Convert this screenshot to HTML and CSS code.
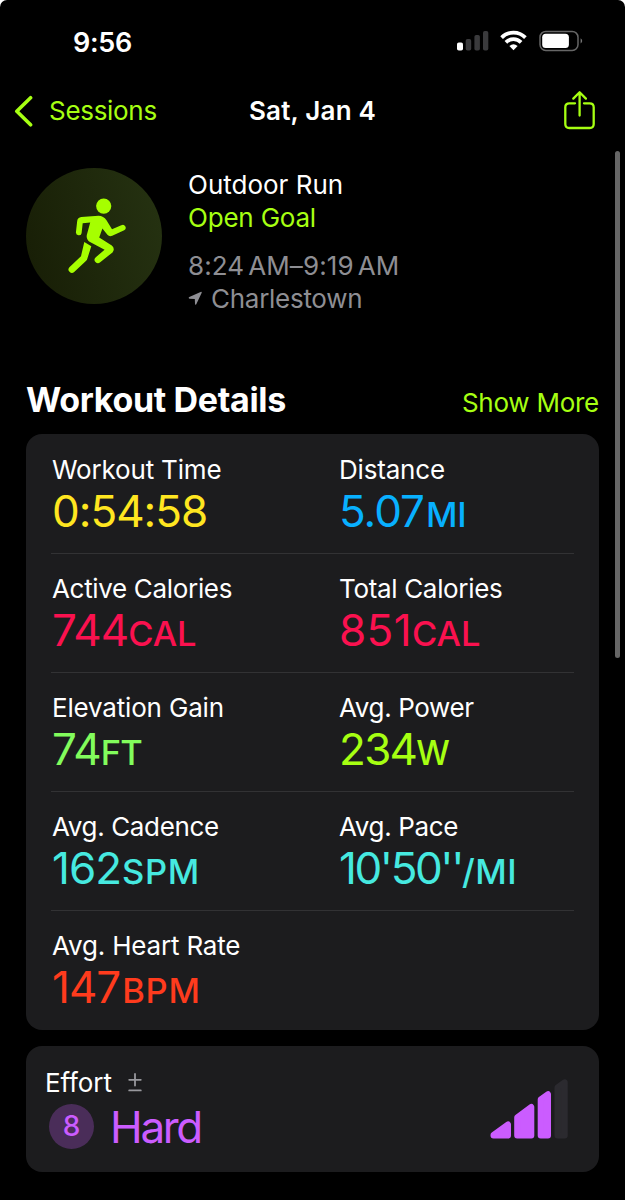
FILE: index.html
```html
<!DOCTYPE html>
<html lang="en">
<head>
<meta charset="utf-8">
<title>Workout</title>
<link rel="stylesheet" href="styles.css">
</head>
<body>
<div class="screen">
  <header class="status">
    <span class="clock">9:56</span>
    <svg class="status-icons" width="128" height="24" viewBox="0 0 128 24">
      <rect x="1" y="13.5" width="6" height="8" rx="1.8" fill="#fff"/>
      <g fill="#3a3a3c"><rect x="9.7" y="10" width="5.5" height="11.5" rx="1.8"/><rect x="18.4" y="6" width="5.5" height="15.5" rx="1.8"/><rect x="27" y="2" width="5.3" height="19.5" rx="1.8"/></g>
      <g fill="none" stroke="#fff" stroke-width="3.7"><path d="M45.6 8.6A16.6 16.6 0 0 1 69.4 8.6"/><path d="M49.9 13.4A10.5 10.5 0 0 1 65.1 13.4"/></g>
      <path d="M57.5 21.3 53.4 17.1Q57.5 13.6 61.6 17.1Z" fill="#fff"/>
      <rect x="84" y="2.4" width="38" height="19" rx="5.8" fill="none" stroke="#666" stroke-width="1.5"/>
      <rect x="86.2" y="4.7" width="26.7" height="14.4" rx="3.5" fill="#fff"/>
      <path d="M124.6 9.3Q127.8 11.9 124.6 14.6Z" fill="#777"/>
    </svg>
  </header>
  <nav class="nav">
    <a class="back"><svg width="20" height="32" viewBox="0 0 20 32"><path d="M16.6 2.7 2.8 16.2 16.6 29.8" fill="none" stroke="#a6ff12" stroke-width="3.6" stroke-linecap="round" stroke-linejoin="round"/></svg><span class="back-label">Sessions</span></a>
    <h1 class="title">Sat, Jan 4</h1>
    <svg class="share" width="34" height="42" viewBox="0 0 34 42"><path d="M12 13.3H6.3Q2.3 13.3 2.3 17.3V34Q2.3 38 6.3 38H26.7Q30.7 38 30.7 34V17.3Q30.7 13.3 26.7 13.3H21M16.6 25.5V3M10.3 8.6 16.6 2.3 22.9 8.6" fill="none" stroke="#a6ff12" stroke-width="2.3" stroke-linecap="round" stroke-linejoin="round"/></svg>
  </nav>
  <section class="summary">
    <div class="avatar">
      <svg width="136" height="136" viewBox="0 0 136 136" fill="#a6ff00">
        <circle cx="77.7" cy="38.1" r="7.6"/>
        <path d="M55.3 49.1 72.5 47.8Q77.5 48 80.5 52.3L86 61.2 95.3 57.2A2.8 2.8 0 0 1 98.2 62.2L86.2 67.7Q83.4 69 81.4 66.7L76.4 60.6 73.2 69.6 85.8 77.6Q89.4 80.6 86.5 84.4L74.2 94.3A3.3 3.3 0 0 1 69.8 89.2L78.6 81.8 64 74Q59.3 70.8 61.2 65.5L64.2 54.6 56.7 55.3 55.6 65.2A2.9 2.9 0 0 1 49.9 64.6L51.2 53Q51.7 49.5 55.3 49.1Z"/>
        <path d="M58.3 74 65.3 78.2 61.4 90.5Q61 92 59.9 93.1L48.2 104A3.4 3.4 0 0 1 43.4 99.2L55 88.2Z"/>
      </svg>
    </div>
    <div class="facts">
      <div class="line kind">Outdoor Run</div>
      <div class="line goal">Open Goal</div>
      <div class="line when">8:24<i class="thin"></i>AM–9:19<i class="thin"></i>AM</div>
      <div class="line where"><svg width="15" height="15" viewBox="0 0 15 15"><path d="M12.6.9Q14.2.4 13.6 2L8.4 13Q7.3 14.8 7 12.8L6.8 8.1 1.5 7.7Q-.1 7 1.3 6Z" fill="#8e8e93"/></svg><span class="place">Charlestown</span></div>
    </div>
  </section>
  <div class="section-head">
    <h2 class="heading">Workout Details</h2>
    <a class="more">Show More</a>
  </div>
  <section class="card metrics">
    <div class="row">
      <div class="metric"><div class="label">Workout Time</div><div class="value yellow">0:54:58</div></div>
      <div class="metric"><div class="label">Distance</div><div class="value blue">5.07<small class="mi">MI</small></div></div>
    </div>
    <div class="row">
      <div class="metric"><div class="label calories">Active Calories</div><div class="value pink">744<small>CAL</small></div></div>
      <div class="metric"><div class="label calories">Total Calories</div><div class="value pink wide">851<small>CAL</small></div></div>
    </div>
    <div class="row">
      <div class="metric"><div class="label">Elevation Gain</div><div class="value green">74<small class="ft">FT</small></div></div>
      <div class="metric"><div class="label power">Avg. Power</div><div class="value lime tight">234<small class="watt">W</small></div></div>
    </div>
    <div class="row">
      <div class="metric"><div class="label power">Avg. Cadence</div><div class="value cyan">162<small class="rate">SPM</small></div></div>
      <div class="metric"><div class="label power">Avg. Pace</div><div class="value cyan pace">10'50''<small>/MI</small></div></div>
    </div>
    <div class="row">
      <div class="metric"><div class="label">Avg. Heart Rate</div><div class="value red">147<small class="rate bpm">BPM</small></div></div>
    </div>
  </section>
  <section class="card effort">
    <div class="effort-main">
      <div class="effort-label">Effort<svg width="14" height="20" viewBox="0 0 14 20"><path d="M7 1V12.5M1.2 6.8H12.8M1.2 17.4H12.8" stroke="#98989d" stroke-width="1.8" stroke-linecap="round"/></svg></div>
      <div class="effort-value"><span class="badge">8</span><span class="hard">Hard</span></div>
    </div>
    <svg class="bars" width="80" height="62" viewBox="0 0 80 62">
      <g fill="#cb5cff" stroke="#cb5cff" stroke-width="6" stroke-linejoin="round">
        <path d="M3.5 56.5V56L18 45.5V56.5Z"/>
        <path d="M27.2 56.5V38.5L41.3 28V56.5Z"/>
        <path d="M50.7 56.5V20.5L58 15.2V56.5Z"/>
      </g>
      <path d="M67.5 56.5V8.5L74.7 3.3V56.5Z" fill="#2b2a2f" stroke="#2b2a2f" stroke-width="6" stroke-linejoin="round"/>
    </svg>
  </section>
  <div class="scrollbar"></div>
</div>
</body>
</html>
```
FILE: styles.css
```css
* { box-sizing: border-box; }
html { background: #fff; }
body { margin: 0; font-family: Inter, "Liberation Sans", sans-serif; color: #fff; }
h1, h2 { margin: 0; }
svg { display: block; flex: none; }
.screen { position: relative; width: 625px; height: 1200px; background: #000; border-radius: 7px 7px 0 0; overflow: hidden; padding: 0 26px; }
.status { height: 84px; padding: 0 15px 0 47px; display: flex; justify-content: space-between; align-items: center; }
.clock { font-size: 27px; font-weight: 600; letter-spacing: -0.3px; }
.status-icons { margin-top: -2px; }
.nav { height: 54px; margin: 0 -12px; display: grid; grid-template-columns: 1fr auto 1fr; align-items: center; }
.back { display: flex; align-items: center; gap: 15px; color: #a6ff12; font-size: 26px; letter-spacing: -0.3px; }
.back-label, .title { margin-top: -2px; }
.title { font-size: 26px; font-weight: 600; letter-spacing: 0.2px; }
.share { justify-self: end; margin-right: 14px; }
.summary { display: flex; gap: 26px; margin-top: 30px; height: 146px; }
.avatar { width: 136px; height: 136px; border-radius: 50%; background: linear-gradient(75deg, #171d05, #263312); overflow: hidden; }
.line { font-size: 26px; line-height: 33px; height: 33px; white-space: nowrap; }
.goal { color: #a6ff12; letter-spacing: -0.2px; }
.when { margin-top: 15px; color: #8e8e93; letter-spacing: 0.1px; }
.where { display: flex; align-items: center; gap: 8px; color: #8e8e93; letter-spacing: -0.28px; }
.thin { display: inline-block; width: 4px; }
.section-head { display: flex; justify-content: space-between; align-items: baseline; height: 54px; margin-top: 66px; }
.heading { font-size: 34px; line-height: 40px; font-weight: 700; letter-spacing: -0.34px; }
.more { font-size: 26px; color: #a6ff12; letter-spacing: -0.25px; }
.card { background: #1c1c1e; border-radius: 16px; }
.metrics { height: 596px; padding: 1px 25px 0; }
.row { height: 119px; padding: 19px 0 0 1px; display: grid; grid-template-columns: 287px 1fr; border-bottom: 1px solid #323234; }
.row:last-child { border-bottom: 0; }
.label { font-size: 26px; line-height: 32px; white-space: nowrap; letter-spacing: -0.18px; }
.label.calories { letter-spacing: -0.33px; }
.label.power { letter-spacing: -0.36px; }
.value { font-size: 44px; line-height: 48px; padding-top: 1px; white-space: nowrap; letter-spacing: -1px; }
.value small { font-size: 34.5px; font-weight: 500; letter-spacing: -0.1px; }
.value .mi { margin-left: 2px; }
.value .rate { margin-left: 1px; letter-spacing: 0.7px; }
.value .bpm { margin-left: 2px; }
.value .ft { letter-spacing: -0.9px; }
.value .watt { font-size: 33.5px; }
.value.tight { letter-spacing: -1.7px; }
.value.wide { letter-spacing: 0.4px; }
.value.pace { letter-spacing: -2.4px; }
.value.pace small { letter-spacing: 0.5px; }
.yellow { color: #ffe620; }
.blue { color: #08b0ff; }
.pink { color: #fa114f; }
.green { color: #82fc5c; }
.lime { color: #a6ff12; }
.cyan { color: #46e9e0; }
.red { color: #ff3b1d; }
.effort { height: 126px; margin-top: 16px; padding: 21px 29px 0 19px; display: flex; justify-content: space-between; }
.effort-label { display: flex; align-items: center; gap: 16px; font-size: 26px; line-height: 32px; letter-spacing: -0.1px; }
.effort-value { display: flex; align-items: center; gap: 16px; height: 46px; margin: 4px 0 0 4px; color: #cb5cff; }
.badge { width: 45px; height: 45px; border-radius: 50%; background: #4a2d59; font-size: 28px; font-weight: 500; display: flex; align-items: center; justify-content: center; }
.hard { font-size: 44px; line-height: 46px; letter-spacing: -2.3px; padding-top: 2px; }
.bars { margin-top: 12px; }
.scrollbar { position: absolute; left: 615px; top: 151px; width: 5px; height: 507px; border-radius: 3px; background: #666; }
```
